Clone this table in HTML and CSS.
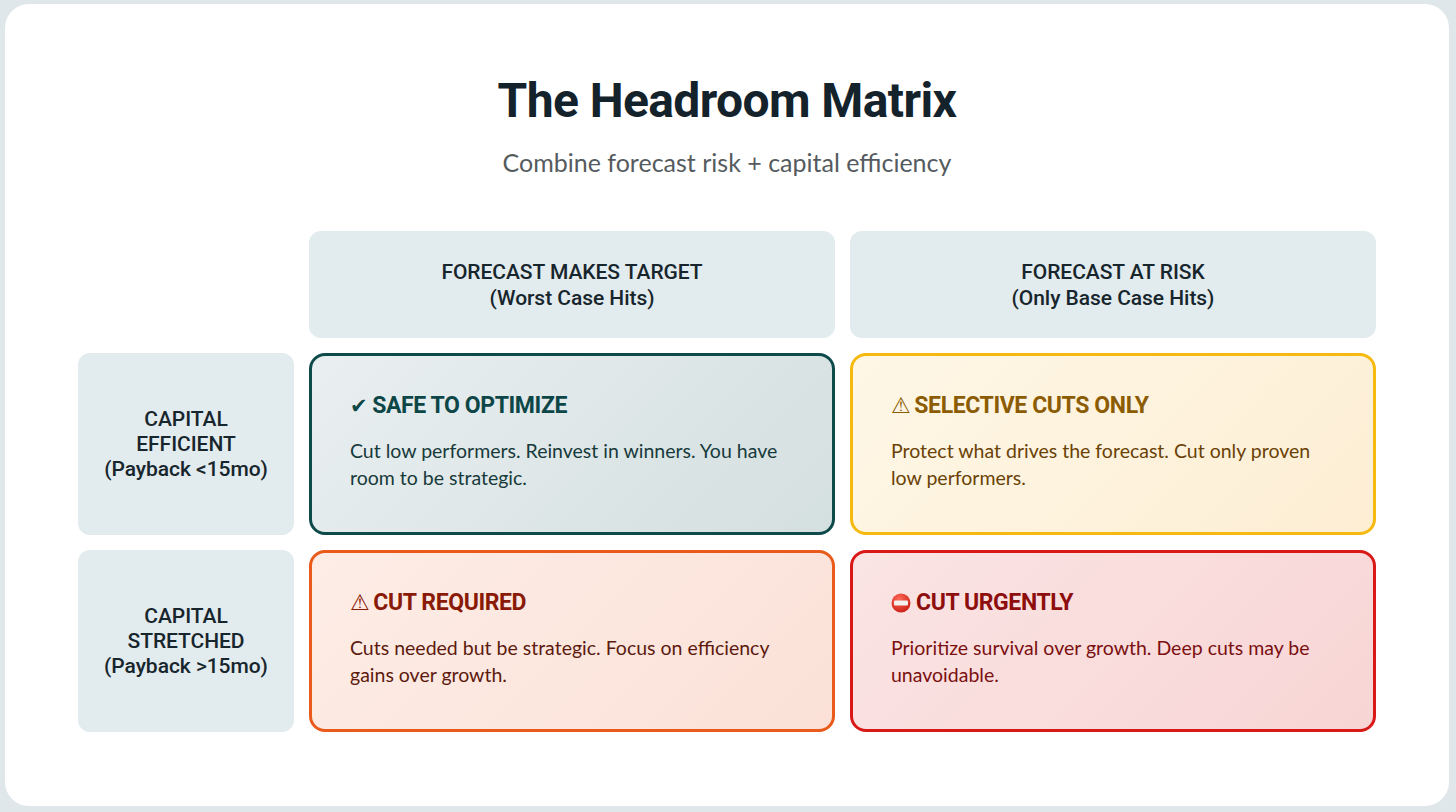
FILE: index.html
```html
<!DOCTYPE html>
<html lang="en">
<head>
<meta charset="utf-8">
<title>The Headroom Matrix</title>
<link rel="stylesheet" href="styles.css">
</head>
<body>
<div class="card">
  <h1 class="title">The Headroom Matrix</h1>
  <p class="subtitle">Combine forecast risk + capital efficiency</p>
  <div class="matrix">
    <div class="corner"></div>
    <div class="head">FORECAST MAKES TARGET<br>(Worst Case Hits)</div>
    <div class="head">FORECAST AT RISK<br>(Only Base Case Hits)</div>

    <div class="head row-label">CAPITAL<br>EFFICIENT<br>(Payback &lt;15mo)</div>
    <div class="cell safe">
      <div class="cell-title"><span class="ico check">✔</span>SAFE TO OPTIMIZE</div>
      <div class="cell-body">Cut low performers. Reinvest in winners. You have room to be strategic.</div>
    </div>
    <div class="cell selective">
      <div class="cell-title"><span class="ico warn">⚠</span> SELECTIVE CUTS ONLY</div>
      <div class="cell-body">Protect what drives the forecast. Cut only proven low performers.</div>
    </div>

    <div class="head row-label">CAPITAL<br>STRETCHED<br>(Payback &gt;15mo)</div>
    <div class="cell required">
      <div class="cell-title"><span class="ico warn">⚠</span> CUT REQUIRED</div>
      <div class="cell-body">Cuts needed but be strategic. Focus on efficiency gains over growth.</div>
    </div>
    <div class="cell urgent">
      <div class="cell-title"><svg class="stop" viewBox="0 0 20 20" width="20" height="20"><defs><radialGradient id="rg" cx="40%" cy="30%" r="75%"><stop offset="0" stop-color="#ff6a5a"/><stop offset="1" stop-color="#c81e12"/></radialGradient></defs><circle cx="10" cy="10" r="9.5" fill="url(#rg)"/><rect x="3" y="7.6" width="14" height="4.8" rx="1" fill="#f4f0ee"/></svg> CUT URGENTLY</div>
      <div class="cell-body">Prioritize survival over growth. Deep cuts may be unavoidable.</div>
    </div>
  </div>
</div>
</body>
</html>
```
FILE: styles.css
```css
* { box-sizing: border-box; }
html, body { margin: 0; padding: 0; }
body {
  background: #dfe7ea;
  width: 1456px;
  height: 812px;
  padding: 4px 7px 6px 5px;
  overflow: hidden;
}
.card {
  background: #ffffff;
  border-radius: 24px;
  height: 802px;
  padding-top: 69px;
  display: flex;
  flex-direction: column;
  align-items: center;
}
.title {
  margin: 0;
  font-family: Roboto, "Liberation Sans", sans-serif;
  font-weight: 700;
  font-size: 48px;
  line-height: 56px;
  color: #14232b;
  letter-spacing: -0.6px;
}
.subtitle {
  margin: 18px 0 0;
  font-family: Lato, "Liberation Sans", sans-serif;
  font-size: 25px;
  line-height: 30px;
  color: #555b5e;
}
.matrix {
  margin-top: 54px;
  display: grid;
  grid-template-columns: 216px 526px 526px;
  grid-template-rows: 107px 182px 182px;
  gap: 15px;
}
.head {
  background: #e2ebee;
  border-radius: 12px;
  display: flex;
  align-items: center;
  justify-content: center;
  text-align: center;
  font-family: Roboto, "Liberation Sans", sans-serif;
  font-weight: 500;
  font-size: 21px;
  line-height: 26px;
  letter-spacing: -0.05px;
  color: #17252c;
}
.row-label { line-height: 25px; }
.cell {
  border: 3px solid;
  border-radius: 16px;
  padding: 0 30px 6px 38px;
  display: flex;
  flex-direction: column;
  justify-content: center;
}
.cell-title {
  font-family: Roboto, "Liberation Sans", sans-serif;
  font-weight: 700;
  font-size: 23px;
  line-height: 28px;
  letter-spacing: -0.4px;
  display: flex;
  align-items: center;
}
.cell-body {
  margin-top: 17px;
  font-family: Lato, "Liberation Sans", sans-serif;
  font-size: 19.5px;
  line-height: 27px;
}
.ico { font-family: "DejaVu Sans", sans-serif; font-weight: 400; }
.check { font-size: 21px; margin-right: 5px; }
.warn { font-size: 22px; margin-right: 4px; }
.stop { margin-right: 5px; }
.safe {
  border-color: #0f4a4b;
  background: linear-gradient(135deg, #e9eff0 0%, #d4dfe0 100%);
  color: #0d4647;
}
.safe .cell-body { color: #173a3b; }
.selective {
  border-color: #f6b90f;
  background: linear-gradient(135deg, #fef7e6 0%, #fdeed4 100%);
  color: #8c5c04;
}
.selective .cell-body { color: #6a4206; }
.required {
  border-color: #ea5a1a;
  background: linear-gradient(135deg, #fdede6 0%, #fbe1d8 100%);
  color: #8a1a08;
}
.required .cell-body { color: #5c1a0e; }
.urgent {
  border-color: #d91818;
  background: linear-gradient(135deg, #fbe4e4 0%, #f8d5d5 100%);
  color: #8e0d0d;
}
.urgent .cell-body { color: #7a1010; }
```
